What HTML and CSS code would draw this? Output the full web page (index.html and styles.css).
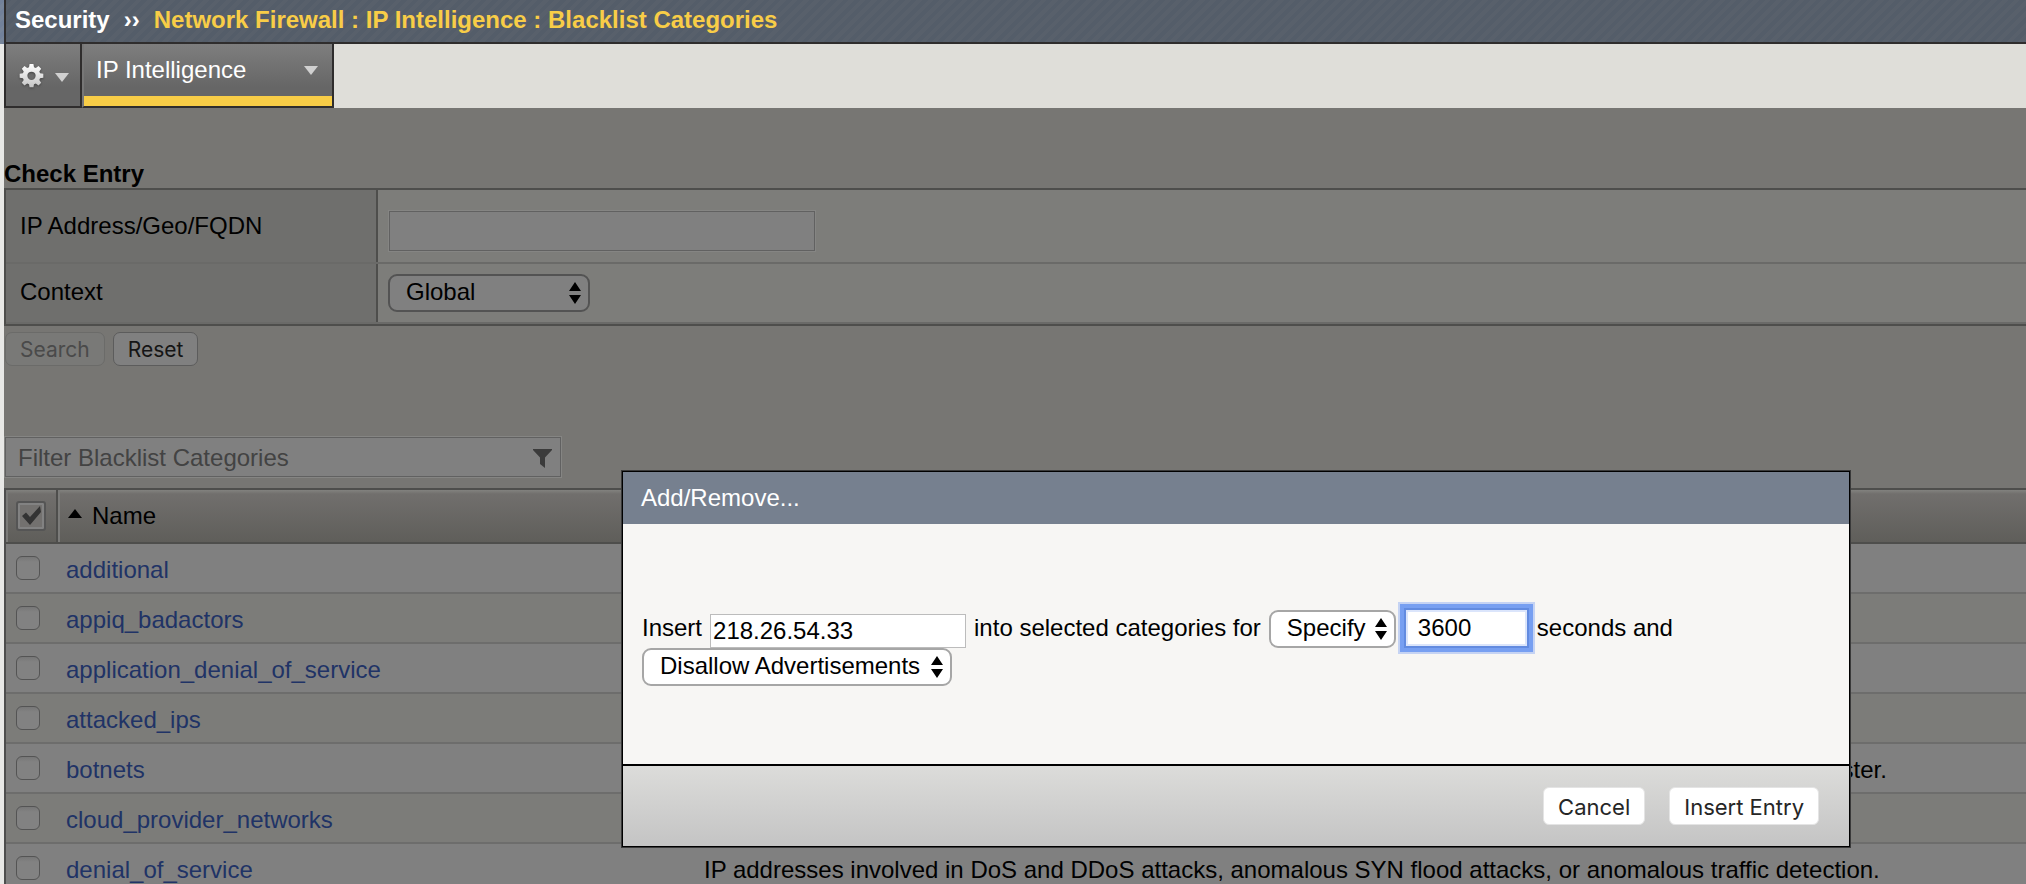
FILE: index.html
```html
<!DOCTYPE html>
<html lang="en">
<head>
<meta charset="utf-8">
<title>Blacklist Categories</title>
<link rel="stylesheet" href="styles.css">
</head>
<body>
<div class="page">
  <header class="topbar">
    <h1 class="crumbs"><span>Security</span><span class="crumb-sep">››</span><span class="crumb-here">Network Firewall : IP Intelligence : Blacklist Categories</span></h1>
  </header>
  <nav class="tabs">
    <button class="tab tab-gear" type="button" aria-label="Settings">
      <svg class="gear" viewBox="0 0 26 26" aria-hidden="true">
        <defs><linearGradient id="g" x1="0" y1="0" x2="0" y2="1"><stop offset="0" stop-color="#fff"/><stop offset="1" stop-color="#c4c4c4"/></linearGradient></defs>
        <path fill="url(#g)" fill-rule="evenodd" d="M11 1h4l.6 3.4 1.9.8 2.8-2 2.8 2.8-2 2.8.8 1.9 3.4.6v4l-3.4.6-.8 1.9 2 2.8-2.8 2.8-2.8-2-1.9.8L15 25.300h-4l-.6-3.100-1.900-.8-2.800 2-2.800-2.800 2-2.800-.8-1.900L.7 15.300v-4l3.400-.6.8-1.900-2-2.800 2.800-2.800 2.800 2 1.900-.8zM13 9a4.300 4.300 0 1 0 0 8.600A4.300 4.300 0 0 0 13 9z"/>
      </svg>
      <svg class="caret" viewBox="0 0 14 9" aria-hidden="true"><path d="M0 0h14L7 9z"/></svg>
    </button>
    <button class="tab tab-current" type="button">IP Intelligence
      <svg class="caret" viewBox="0 0 14 9" aria-hidden="true"><path d="M0 0h14L7 9z"/></svg>
    </button>
  </nav>
  <main class="content">
    <h2 class="section-title">Check Entry</h2>
    <div class="form">
      <div class="form-row form-row-tall">
        <label class="form-label" for="ip">IP Address/Geo/FQDN</label>
        <div class="form-field"><input class="field ip-field" id="ip" type="text"></div>
      </div>
      <div class="form-row">
        <label class="form-label" for="context">Context</label>
        <div class="form-field">
          <span class="picker picker-context">
            <select id="context"><option>Global</option></select>
            <svg class="arrows" viewBox="0 0 12 22" aria-hidden="true"><path d="M6 0l6 9H0zM0 13h12l-6 9z"/></svg>
          </span>
        </div>
      </div>
    </div>
    <div class="actions">
      <button class="btn btn-dim" type="button" disabled>Search</button>
      <button class="btn" type="button">Reset</button>
    </div>
    <div class="filter">
      <input class="field filter-field" type="text" placeholder="Filter Blacklist Categories" aria-label="Filter Blacklist Categories">
      <svg class="funnel" viewBox="0 0 19 19" aria-hidden="true"><path d="M0 0h19v1l-7 7.500V19l-5-4V8.500L0 1z"/></svg>
    </div>
    <table class="list">
      <colgroup><col class="col-check"><col class="col-name"><col></colgroup>
      <thead>
        <tr>
          <th class="cell-check"><label class="check-all"><input type="checkbox" checked aria-label="Select all"><svg viewBox="0 0 20 20" aria-hidden="true"><path d="M0 10l4-3.500 4 4.500L18 0l1 6-11 13z"/></svg></label></th>
          <th class="cell-name"><svg class="sort" viewBox="0 0 14 9" aria-hidden="true"><path d="M7 0l7 9H0z"/></svg>Name</th>
          <th></th>
        </tr>
      </thead>
      <tbody>
        <tr><td class="cell-check"><input type="checkbox" aria-label="additional"></td><td><a href="#">additional</a></td><td></td></tr>
        <tr><td class="cell-check"><input type="checkbox" aria-label="appiq_badactors"></td><td><a href="#">appiq_badactors</a></td><td></td></tr>
        <tr><td class="cell-check"><input type="checkbox" aria-label="application_denial_of_service"></td><td><a href="#">application_denial_of_service</a></td><td></td></tr>
        <tr><td class="cell-check"><input type="checkbox" aria-label="attacked_ips"></td><td><a href="#">attacked_ips</a></td><td></td></tr>
        <tr><td class="cell-check"><input type="checkbox" aria-label="botnets"></td><td><a href="#">botnets</a></td><td>IP addresses of Botnet Command and Control channels, and infected zombie machine controlled by Botmaster.</td></tr>
        <tr><td class="cell-check"><input type="checkbox" aria-label="cloud_provider_networks"></td><td><a href="#">cloud_provider_networks</a></td><td></td></tr>
        <tr><td class="cell-check"><input type="checkbox" aria-label="denial_of_service"></td><td><a href="#">denial_of_service</a></td><td>IP addresses involved in DoS and DDoS attacks, anomalous SYN flood attacks, or anomalous traffic detection.</td></tr>
      </tbody>
    </table>
  </main>
</div>

<section class="dialog" role="dialog" aria-labelledby="dialog-title">
  <h2 class="dialog-title" id="dialog-title">Add/Remove...</h2>
  <div class="dialog-body">
    <div class="line">
      <label for="entry">Insert</label>
      <input class="entry-field" id="entry" type="text" value="218.26.54.33">
      <label for="mode">into selected categories for</label>
      <span class="picker picker-mode">
        <select id="mode"><option>Specify</option></select>
        <svg class="arrows" viewBox="0 0 12 22" aria-hidden="true"><path d="M6 0l6 9H0zM0 13h12l-6 9z"/></svg>
      </span>
      <input class="seconds-field" id="seconds" type="text" value="3600">
      <label for="seconds">seconds and</label>
    </div>
    <div class="line">
      <span class="picker picker-ads">
        <select aria-label="Advertisements"><option>Disallow Advertisements</option></select>
        <svg class="arrows" viewBox="0 0 12 22" aria-hidden="true"><path d="M6 0l6 9H0zM0 13h12l-6 9z"/></svg>
      </span>
    </div>
  </div>
  <div class="dialog-foot">
    <button class="btn btn-light" type="button">Cancel</button>
    <button class="btn btn-light" type="button">Insert Entry</button>
  </div>
</section>
</body>
</html>
```

FILE: styles.css
```css
* { box-sizing: border-box; }

html, body { height: 100%; }

body {
  margin: 0;
  overflow: hidden;
  background: #e8e8e6;
  color: #000;
  font: 24px/28px "Liberation Sans", Arial, sans-serif;
}

input, select, button { font: inherit; color: inherit; margin: 0; }
h1, h2 { margin: 0; font-size: 24px; line-height: 28px; }
svg { display: block; flex: none; }

.page { display: flex; flex-direction: column; min-height: 100%; }

/* Title bar */
.topbar {
  padding-left: 4px;
  background: repeating-linear-gradient(135deg, #72819a 0 4px, #77859a 4px 8px);
}
.crumbs {
  display: flex;
  height: 44px;
  padding: 6px 0 0 9px;
  border-left: 2px solid #2f2d2d;
  border-bottom: 2px solid #2f2d2d;
  background: repeating-linear-gradient(135deg, #545d69 0 4px, #58606b 4px 8px);
  color: #fff;
}
.crumb-sep { margin: 0 14px; }
.crumb-here { color: #f8cd47; }

/* Tabs */
.tabs {
  display: flex;
  height: 64px;
  margin-left: 4px;
  background: #dfded9;
}
.tab {
  display: flex;
  align-items: center;
  border: 2px solid #2f2d2d;
  border-top: 0;
  background: linear-gradient(#7e7e7e, #666 70%);
  color: #fff;
}
.tab-gear { gap: 11px; width: 78px; padding: 0 10px 0 13px; }
.gear { width: 25px; height: 25px; filter: drop-shadow(0 1px 1px #444); }
.caret { width: 14px; height: 9px; fill: #d0d0d0; }
.tab-gear .caret { margin-top: 5px; }
.tab-current {
  justify-content: space-between;
  width: 252px;
  padding: 0 14px 10px 12px;
  border-left: 2px solid #777;
  box-shadow: inset 0 -10px #f8cd47;
}

/* Check entry form */
.content {
  flex: 1;
  margin-left: 4px;
  padding-top: 52px;
  background: #777673;
}
.form {
  border-top: 2px solid #4e4e4c;
  border-bottom: 2px solid #4e4e4c;
  border-left: 2px solid #4e4e4c;
  background: #7d7d7a;
}
.form-row {
  display: flex;
  height: 60px;
  border-bottom: 2px solid #6a6a68;
}
.form-row-tall { height: 74px; }
.form-label {
  width: 372px;
  padding: 14px;
  border-right: 2px solid #4e4e4c;
  background: #6f6f6d;
}
.form-row-tall .form-label { padding-top: 22px; }
.form-field { padding: 10px; }
.form-row-tall .form-field { padding: 21px 11px; }
.field {
  height: 40px;
  border: 1px solid #616161;
  border-radius: 0;
  background: #808080;
  outline: 1px solid #858583;
}
.ip-field { display: block; width: 426px; }

.picker { position: relative; display: block; }
.picker select {
  appearance: none;
  display: block;
  width: 100%;
  height: 38px;
  padding: 0 16px 2px;
  border: 2px solid #a6a6a6;
  border-radius: 9px;
  background: #fff;
  line-height: 28px;
}
.arrows { position: absolute; right: 9px; top: 8px; width: 12px; height: 22px; }
.picker-context { width: 202px; }
.picker-context select { border-color: #535353; background: #808080; }

.actions { display: flex; gap: 8px; padding: 6px 1px; }
.btn {
  height: 34px;
  padding: 2px 14px 0;
  border: 1px solid #5c5c5c;
  border-radius: 7px;
  background: #808080;
  color: #151515;
  font: 21px/28px Inter, "Liberation Sans", sans-serif;
}
.btn-dim { border-color: #6b6b69; background: #797977; color: #4a4a4a; }

/* Category filter */
.filter { position: relative; width: 557px; margin-top: 65px; padding-left: 1px; }
.filter-field { display: block; width: 100%; padding: 2px 48px 0 12px; }
.filter-field::placeholder { color: #434343; opacity: 1; }
.funnel { position: absolute; right: 9px; top: 12px; width: 19px; height: 19px; fill: #3b3b3b; }

/* Category table */
.list {
  width: 100%;
  margin-top: 11px;
  border-collapse: separate;
  border-spacing: 0;
  table-layout: fixed;
  border-left: 2px solid #4e4e4e;
}
.col-check { width: 52px; }
.col-name { width: 638px; }
.list th {
  height: 56px;
  padding: 0 8px;
  border-top: 2px solid #4e4e4c;
  border-bottom: 2px solid #4e4e4c;
  background: linear-gradient(#82827f, #716f6d 4px, #5f5e5a);
  font-weight: normal;
  text-align: left;
}
.list th.cell-check { border-right: 2px solid #4e4e4c; box-shadow: inset 2px 0 #7b7b79; }
.list th.cell-name { box-shadow: inset 2px 0 #7b7b79; padding: 0 10px; }
.list td {
  height: 50px;
  padding: 4px 8px 0;
  border-bottom: 2px solid #6d6d6c;
  background: #808080;
  white-space: nowrap;
}
.list tr:nth-child(even) td { background: #7c7c79; }
.list .cell-check { padding: 0 10px; }
.list a { color: #203366; text-decoration: none; }
.list td input {
  appearance: none;
  display: block;
  width: 24px;
  height: 24px;
  border: 1px solid #545454;
  border-radius: 6px;
  background: linear-gradient(#777, #828282 5px);
}
.sort { display: inline-block; width: 14px; height: 9px; margin-right: 10px; vertical-align: 6px; }
.check-all { position: relative; display: block; width: 30px; height: 30px; }
.check-all input {
  appearance: none;
  display: block;
  width: 30px;
  height: 30px;
  border: 2px solid #555;
  border-radius: 3px;
  background: #73716f;
  box-shadow: inset 0 0 0 2px #828282;
}
.check-all svg { position: absolute; left: 6px; top: 5px; width: 20px; height: 20px; fill: #333; }

/* Dialog */
.dialog {
  position: absolute;
  left: 622px;
  top: 471px;
  width: 1228px;
  border: 1px solid #000;
  outline: 1px solid #3a3a3a;
  background: #f7f6f4;
}
.dialog-title {
  height: 52px;
  padding: 12px 18px;
  background: #76808f;
  color: #fff;
  font-weight: normal;
}
.dialog-body { min-height: 240px; padding: 84px 19px 0; }
.line { display: flex; align-items: flex-end; gap: 8px; line-height: 40px; }
.entry-field {
  width: 256px;
  height: 34px;
  padding: 0 2px;
  border: 1px solid #bcbcbc;
  background: #fff;
}
.seconds-field {
  width: 125px;
  height: 40px;
  padding: 0 12px;
  border: 2px solid #628be0;
  background: #fff;
  box-shadow: inset 0 0 0 2px #dbe5fb, 0 0 0 4px #779ff1, 0 0 0 6px #c5d3f3;
  outline: none;
}
.picker-mode { width: 127px; }
.picker-ads { width: 310px; }
.dialog-foot {
  display: flex;
  justify-content: flex-end;
  gap: 24px;
  padding: 21px 30px;
  border-top: 2px solid #000;
  background: linear-gradient(#dcdcda, #c4c4c4);
}
.btn-light {
  height: 38px;
  padding: 2px 14px 0;
  border-color: #e4e4e4;
  border-radius: 6px;
  background: #fff;
  color: #262626;
  font-size: 22px;
}
```
